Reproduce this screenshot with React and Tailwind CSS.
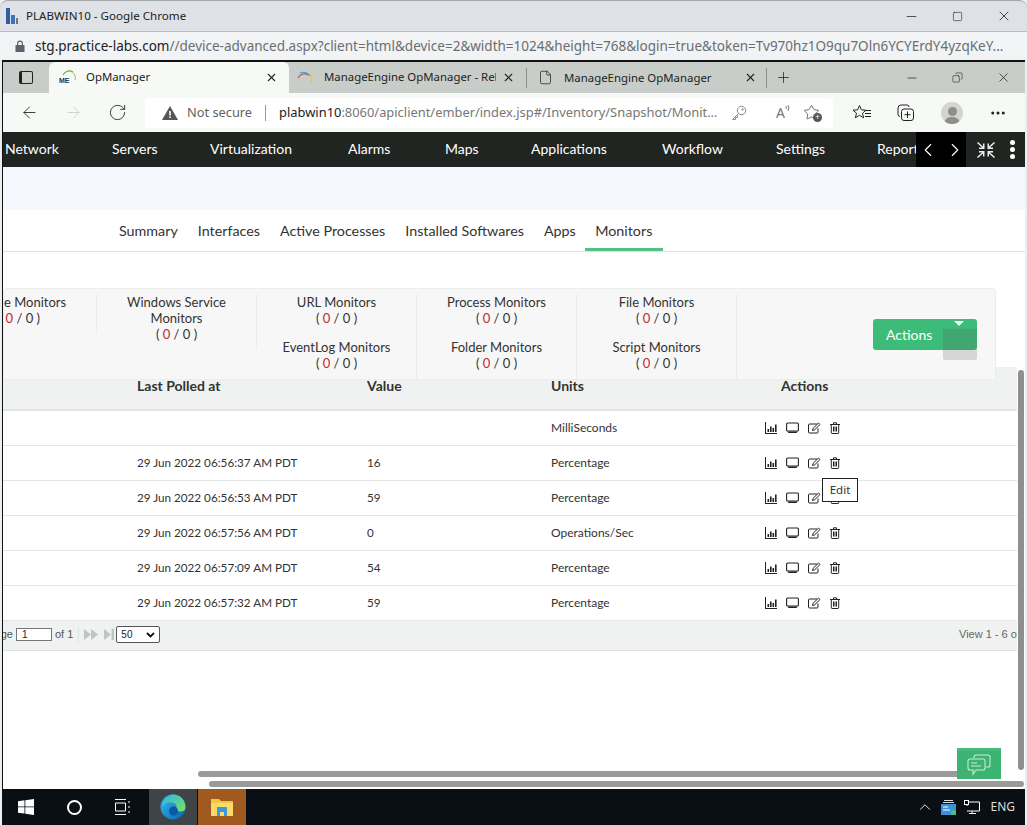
import { ArrowLeft, ArrowRight, ChevronLeft, ChevronRight, ChevronUp, Copy, File, Minus, MoreHorizontal, Plus, RotateCw, Square, Star, X } from 'lucide-react'

const navItems = [
  { label: 'Network', w: 'w-[107px]' },
  { label: 'Servers', w: 'w-[98px]' },
  { label: 'Virtualization', w: 'w-[138px]' },
  { label: 'Alarms', w: 'w-[97px]' },
  { label: 'Maps', w: 'w-[86px]' },
  { label: 'Applications', w: 'w-[131px]' },
  { label: 'Workflow', w: 'w-[114px]' },
  { label: 'Settings', w: 'w-[101px]' },
  { label: 'Reports', w: 'w-[39px]' },
]

const tabs = ['Summary', 'Interfaces', 'Active Processes', 'Installed Softwares', 'Apps']

const rows = [
  { polled: '', value: '', units: 'MilliSeconds' },
  { polled: '29 Jun 2022 06:56:37 AM PDT', value: '16', units: 'Percentage' },
  { polled: '29 Jun 2022 06:56:53 AM PDT', value: '59', units: 'Percentage' },
  { polled: '29 Jun 2022 06:57:56 AM PDT', value: '0', units: 'Operations/Sec' },
  { polled: '29 Jun 2022 06:57:09 AM PDT', value: '54', units: 'Percentage' },
  { polled: '29 Jun 2022 06:57:32 AM PDT', value: '59', units: 'Percentage' },
]

const Count = () => (
  <div>( <span className="text-[#c0282d]">0</span> / 0 )</div>
)

const MonitorCell = ({ title, line2 }) => (
  <div className="h-[45px] text-center text-[13px] leading-[16px] text-[#333]">
    <div>{title}</div>
    {line2 && <div>{line2}</div>}
    <Count />
  </div>
)

const ChartIcon = () => (
  <svg width="12" height="12" viewBox="0 0 12 12" fill="#222">
    <path d="M0 0h1v11h11v1H0z" />
    <path d="M2.500 7h1.600v3H2.500zM5 4.500h1.600V10H5zM7.500 6h1.600v4H7.500zM10 2.500h1.600V10H10z" />
  </svg>
)

const ScreenIcon = () => (
  <svg width="13" height="12" viewBox="0 0 13 12" fill="none">
    <rect x="0.6" y="1" width="11.800" height="8" rx="1" stroke="#222" strokeWidth="1.100" />
    <path d="M1.500 9.500h10l-1 1.500h-8z" fill="#222" />
  </svg>
)

const EditIcon = () => (
  <svg width="13" height="12" viewBox="0 0 13 12" fill="none" stroke="#222">
    <path d="M9 2H1.500a1 1 0 0 0-1 1v7a1 1 0 0 0 1 1h7.500a1 1 0 0 0 1-1V6.500" />
    <path d="M4.500 8.500l.6-2.200L10.500 1l1.500 1.500-5.300 5.300z" fill="#fff" />
  </svg>
)

const TrashIcon = () => (
  <svg width="10" height="12" viewBox="0 0 10 12" fill="none" stroke="#222">
    <path d="M0 2.500h10M3.500 2.500V.8h3v1.700" />
    <path d="M1.300 2.500v8.200a.8.8 0 0 0 .8.800h5.800a.8.8 0 0 0 .8-.8V2.500" />
    <path d="M3.500 4.500v5M5 4.500v5M6.500 4.500v5" />
  </svg>
)

const FilledArrows = () => (
  <svg width="32" height="11" viewBox="0 0 32 11" fill="#bfc5c2">
    <path d="M0 0l7 5.500L0 11zM7 0l7 5.500L7 11z" />
    <path d="M20 0l7 5.500L20 11zM27.500 0H30v11h-2.500z" />
  </svg>
)

const EdgeLogo = () => (
  <svg width="26" height="26" viewBox="0 0 26 26">
    <defs>
      <linearGradient id="edgeA" x1="0" y1="0" x2="1" y2="1">
        <stop offset="0" stopColor="#35c1f1" />
        <stop offset="1" stopColor="#0b5fb0" />
      </linearGradient>
      <linearGradient id="edgeB" x1="0" y1="0" x2="1" y2="1">
        <stop offset="0" stopColor="#2fb6e8" />
        <stop offset="1" stopColor="#7be25a" />
      </linearGradient>
    </defs>
    <circle cx="13" cy="13" r="12.500" fill="url(#edgeA)" />
    <path d="M3 9C5 3 10 .5 13 .5 20 .5 25.500 6 25.500 13c0 3-2 4.500-5 4.500-3 0-5-1-5-2.500 2-1 1.500-5.500-3-6.500C8 7.500 4 9 3 13z" fill="url(#edgeB)" />
    <circle cx="13.500" cy="17" r="4.500" fill="#0a58a8" />
  </svg>
)

const FolderLogo = () => (
  <svg width="22" height="20" viewBox="0 0 22 20">
    <path d="M0 2h8l2 2h12v15H0z" fill="#f5c542" />
    <path d="M0 6h22v13H0z" fill="#fcd96b" />
    <path d="M6 10h10v9H6z" fill="#3d9ad8" />
    <path d="M9 15h4v4H9z" fill="#fcd96b" />
  </svg>
)

const MeLogo = () => (
  <svg width="18" height="18" viewBox="0 0 18 18" fill="none">
    <path d="M4 7a7 7 0 0 1 10-3" stroke="#5fb548" strokeWidth="1.200" />
    <path d="M8 3a7 7 0 0 1 8 9" stroke="#8ac75a" strokeWidth="1" />
    <text x="0" y="15" fontSize="7" fontWeight="700" fontFamily="Liberation Sans" fill="#333">ME</text>
  </svg>
)

const KeyIcon = () => (
  <svg width="16" height="16" viewBox="0 0 16 16" fill="none" stroke="#8a8a8a" className="ml-[12px] shrink-0">
    <circle cx="10.500" cy="5.500" r="4.200" />
    <circle cx="11.500" cy="4.500" r=".8" />
    <path d="M7.500 8.500L1.500 14.500H4.500V12.500H6.500V10.500" />
  </svg>
)

const FavoritesIcon = () => (
  <svg width="20" height="17" viewBox="0 0 20 17" fill="none" stroke="#222" className="ml-[19px]">
    <path d="M7.500 1.500l1.900 4.300 4.600.4-3.500 3 1.100 4.600-4.100-2.500-4.100 2.500 1.100-4.600-3.500-3 4.600-.4z" />
    <path d="M14 6.500h5M13 9.500h6M13 12.500h6" />
  </svg>
)

const TitleBar = () => (
  <div className="h-[32px] shrink-0 bg-[#dee1e6] flex items-center border-b border-[#b9bcc0] border-t border-t-[#a4a7aa] rounded-t-[8px]">
    <div className="ml-[6px] mr-[8px] flex items-end gap-[1px] h-[16px]">
      <div className="w-[4px] h-[16px] bg-[#2f5d9e]" />
      <div className="w-[4px] h-[9px] bg-[#3f72b8]" />
      <div className="w-[2px] h-[6px] bg-[#777]" />
    </div>
    <span className="text-[11.6px] text-[#222]">PLABWIN10 - Google Chrome</span>
    <div className="ml-auto flex items-center text-[#222]">
      <Minus size={15} strokeWidth={1.200} className="mr-[33px]" />
      <Square size={11} strokeWidth={1.300} className="mr-[33px]" />
      <X size={16} strokeWidth={1.200} className="mr-[15px]" />
    </div>
  </div>
)

const HostAddress = () => (
  <div className="h-[28px] shrink-0 bg-[#f1f3f4] flex items-center pl-[15px] whitespace-nowrap">
    <svg width="10" height="12" viewBox="0 0 10 12" className="mr-[10px]" fill="#5f6368">
      <path d="M2 5V3.500a3 3 0 0 1 6 0V5h1.500v7H.5V5zM3.200 5h3.600V3.500a1.800 1.800 0 0 0-3.600 0z" />
    </svg>
    <span className="text-[13.5px] text-[#6a6e72]">
      <span className="text-[#202124]">stg.practice-labs.com</span>//device-advanced.aspx?client=html&amp;device=2&amp;width=1024&amp;height=768&amp;login=true&amp;token=Tv970hz1O9qu7Oln6YCYErdY4yzqKeY...
    </span>
  </div>
)

const BrowserTabs = () => (
  <div className="h-[33px] shrink-0 bg-[#c9cdc9] flex items-center border-t-2 border-[#111] text-[11.4px] text-[#222]">
    <div className="w-[46px] h-full flex items-center justify-center">
      <div className="w-[14px] h-[13px] rounded-[2px] border border-[#222] border-l-[3px]" />
    </div>
    <div className="w-[240px] h-full bg-[#f7f9f7] rounded-t-[6px] flex items-center pl-[10px] pb-[1px]">
      <MeLogo />
      <span className="ml-[9px]">OpManager</span>
      <X size={13} className="ml-auto mr-[11px]" />
    </div>
    <div className="w-[237px] h-full flex items-center pl-[8px] pb-[1px]">
      <svg width="17" height="14" viewBox="0 0 17 14" fill="none">
        <path d="M1 8a7 7 0 0 1 10-3" stroke="#d8473f" strokeWidth="1.200" />
        <path d="M3 3a8 8 0 0 1 10 3" stroke="#3ea7d8" strokeWidth="1.200" />
        <path d="M13 4a7 7 0 0 1 1 8" stroke="#efc23a" strokeWidth="1.500" />
      </svg>
      <span className="ml-[10px] w-[172px] overflow-hidden whitespace-nowrap">ManageEngine OpManager - Release</span>
      <X size={13} className="ml-auto mr-[11px]" />
    </div>
    <div className="w-[240px] h-[20px] flex items-center border-l border-[#8d908d]">
      <File size={15} strokeWidth={1.200} className="ml-[11px]" />
      <span className="ml-[11px]">ManageEngine OpManager</span>
      <X size={13} className="ml-auto mr-[9px]" />
    </div>
    <div className="h-[20px] border-l border-[#8d908d] flex items-center pl-[8px]">
      <Plus size={17} strokeWidth={1.100} />
    </div>
    <div className="ml-auto h-full flex items-center">
      <Minus size={14} strokeWidth={1.200} className="mr-[33px]" />
      <Copy size={11} strokeWidth={1.300} className="mr-[33px] -scale-x-100" />
      <X size={15} strokeWidth={1.200} className="mr-[14px]" />
    </div>
  </div>
)

const Toolbar = () => (
  <div className="h-[39px] shrink-0 bg-[#f7f9f7] flex items-center">
    <ArrowLeft size={19} strokeWidth={1.100} className="ml-[17px] text-[#222]" />
    <ArrowRight size={19} strokeWidth={1.100} className="ml-[25px] text-[#c9cbc9]" />
    <RotateCw size={19} strokeWidth={1.200} className="ml-[25px] text-[#333]" />
    <div className="ml-[18px] w-[688px] h-[30px] bg-white rounded-[4px] flex items-center pl-[17px] whitespace-nowrap">
      <svg width="16" height="14" viewBox="0 0 16 14" className="mr-[9px] shrink-0">
        <path d="M8 0l8 14H0z" fill="#555" />
        <path d="M7.200 5h1.600v4.500H7.200zM7.200 10.500h1.600V12H7.200z" fill="#fff" />
      </svg>
      <span className="text-[12.800px] text-[#5f6360] shrink-0">Not secure</span>
      <div className="w-px h-[16px] shrink-0 bg-[#999] mx-[13px]" />
      <span className="text-[12.900px] text-[#222] flex-1 min-w-0">
        plabwin10<span className="text-[#777]">:8060/apiclient/ember/index.jsp#/Inventory/Snapshot/Monit...</span>
      </span>
      <KeyIcon />
      <span className="ml-[29px] text-[14px] text-[#777] flex items-start shrink-0">
        A
        <svg width="6" height="8" viewBox="0 0 6 8" fill="none" stroke="#777" className="mt-[2px]">
          <path d="M1 5a3 3 0 0 0 0-3M3 7a6 6 0 0 0 0-6" />
        </svg>
      </span>
      <span className="ml-[12px] mr-[13px] relative shrink-0">
        <Star size={17} strokeWidth={1.100} className="text-[#444]" />
        <span className="absolute -right-[2px] -bottom-[1px] w-[9px] h-[9px] rounded-full bg-[#555] text-white text-[8px] leading-[8px] text-center">+</span>
      </span>
    </div>
    <FavoritesIcon />
    <svg width="17" height="17" viewBox="0 0 17 17" fill="none" stroke="#222" className="ml-[25px]">
      <path d="M3 12.500a2 2 0 0 1-2-2V4a3 3 0 0 1 3-3h6a2 2 0 0 1 2 2" />
      <rect x="4.500" y="5" width="12" height="11.500" rx="2.500" fill="#f7f9f7" />
      <path d="M10.500 7.500v6.500M7.500 10.700h6" />
    </svg>
    <div className="ml-[27px] w-[22px] h-[22px] rounded-full bg-[#d4d4d2] flex flex-col items-center justify-end overflow-hidden">
      <div className="w-[9px] h-[9px] rounded-full bg-[#8d8d8b] mb-[1px]" />
      <div className="w-[16px] h-[7px] rounded-t-full bg-[#8d8d8b]" />
    </div>
    <MoreHorizontal size={18} className="ml-[26px] text-[#222]" />
  </div>
)

const NavBar = () => (
  <div className="h-[35px] shrink-0 bg-[#212522] flex items-center text-white text-[14px] pl-[2px]">
    <div className="w-[911px] flex overflow-hidden whitespace-nowrap pb-[2px]">
      {navItems.map((item) => (
        <div key={item.label} className={`${item.w} shrink-0 overflow-hidden`}>{item.label}</div>
      ))}
    </div>
    <div className="w-[50px] h-full bg-black flex items-center justify-center gap-[5px]">
      <ChevronLeft size={22} strokeWidth={1.200} />
      <ChevronRight size={22} strokeWidth={1.200} />
    </div>
    <svg width="18" height="16" viewBox="0 0 18 16" fill="#eee" className="ml-[11px]">
      <path d="M1 0l5 4.500V1.500h1.500V7H2V5.500h3L0 1zM17 0l-5 4.500V1.500h-1.500V7H16V5.500h-3L18 1zM1 16l5-4.500v3h1.500V9H2v1.500h3L0 15zM17 16l-5-4.500v3h-1.500V9H16v1.500h-3L18 15z" />
    </svg>
    <div className="ml-[15px] flex flex-col gap-[2px]">
      <div className="w-[5px] h-[5px] rounded-full bg-white" />
      <div className="w-[5px] h-[5px] rounded-full bg-white" />
      <div className="w-[5px] h-[5px] rounded-full bg-white" />
    </div>
  </div>
)

const SubTabs = () => (
  <div className="h-[42px] flex items-center pl-[116px] pt-[1px] border-b border-[#dfe2e0] text-[14.300px] text-[#333]">
    <div className="flex gap-[20px]">
      {tabs.map((t) => (
        <span key={t}>{t}</span>
      ))}
    </div>
    <div className="ml-[9px] w-[78px] h-full flex items-center justify-center border-b-[3px] border-[#52c084] pt-[3px]">Monitors</div>
  </div>
)

const MonitorPanel = () => (
  <div className="relative z-10 w-[993px] h-[92px] -mb-[13px] mt-[36px] pt-[5px] bg-[#f7f7f7] border border-[#eceeed] rounded-[3px] flex">
    <div className="w-[93px] h-[40px] border-r border-[#ececec] overflow-hidden text-[13px] leading-[16px] text-[#333] text-right whitespace-nowrap">
      <div className="pr-[32px]">e Monitors</div>
      <div className="pr-[56px] flex justify-end"><Count /></div>
    </div>
    <div className="w-[160px] h-[56px] border-r border-[#ececec]">
      <MonitorCell title="Windows Service" line2="Monitors" />
    </div>
    <div className="w-[160px] border-r border-[#ececec]">
      <MonitorCell title="URL Monitors" />
      <MonitorCell title="EventLog Monitors" />
    </div>
    <div className="w-[160px] border-r border-[#ececec]">
      <MonitorCell title="Process Monitors" />
      <MonitorCell title="Folder Monitors" />
    </div>
    <div className="w-[160px] border-r border-[#ececec]">
      <MonitorCell title="File Monitors" />
      <MonitorCell title="Script Monitors" />
    </div>
    <div className="relative ml-[136px] mt-[25px] w-[104px] h-[31px] bg-[#3dbb78] rounded-[3px] text-white text-[14px] flex items-center pl-[13px]">
      Actions
      <div className="absolute right-0 top-[10px] w-[34px] h-[31px] bg-[#555]/20 rounded-b-[2px]" />
      <div className="absolute left-[81px] top-[2px] w-0 h-0 border-x-[5px] border-x-transparent border-t-[5px] border-t-white" />
    </div>
  </div>
)

const MonitorTable = () => (
  <div className="w-[1014px]">
    <div className="h-[44px] bg-[#eff2f0] border-b-2 border-[#e2e5e3] grid grid-cols-[134px_230px_184px_214px_1fr] pt-[8px] text-[14px] font-bold text-[#333]">
      <div />
      <div>Last Polled at</div>
      <div>Value</div>
      <div>Units</div>
      <div className="pl-[16px]">Actions</div>
    </div>
    {rows.map((r, i) => (
      <div key={i} className="h-[35px] border-b border-[#e3e6e4] grid grid-cols-[134px_230px_184px_214px_1fr] items-center text-[11.700px] text-[#333]">
        <div />
        <div>{r.polled}</div>
        <div>{r.value}</div>
        <div className="text-[12px]">{r.units}</div>
        <div className="flex items-center gap-[9px]">
          <ChartIcon />
          <ScreenIcon />
          <EditIcon />
          <TrashIcon />
        </div>
      </div>
    ))}
    <div className="h-[30px] pb-[2px] bg-[#eff2f0] border-b border-[#dfe2e0] flex items-center font-['Liberation_Sans'] text-[11px] text-[#555] whitespace-nowrap">
      <span className="w-[10px] overflow-hidden flex justify-end shrink-0">ge</span>
      <div className="ml-[3px] w-[36px] h-[13px] bg-white border border-[#767676] text-[10px] leading-[11px] text-[#222] pl-[5px]">1</div>
      <span className="ml-[3px]">of 1</span>
      <div className="ml-[5px] w-px h-[18px] bg-[#e0e4e2]" />
      <div className="ml-[5px]"><FilledArrows /></div>
      <div className="w-[44px] h-[17px] bg-white border border-[#555] rounded-[2px] flex items-center justify-between px-[4px] text-[10px] text-[#222]">
        50
        <svg width="9" height="6" viewBox="0 0 9 6" fill="none" stroke="#111" strokeWidth="1.800"><path d="M1 1l3.500 3.500L8 1" /></svg>
      </div>
      <div className="ml-auto w-[58px] overflow-hidden text-[#666]">View 1 - 6 of 6</div>
    </div>
  </div>
)

const Taskbar = () => (
  <div className="h-[36px] shrink-0 bg-[#0a0f14] flex items-center text-white">
    <svg width="16" height="16" viewBox="0 0 16 16" fill="#fff" className="ml-[15px]">
      <path d="M0 2.200l6.500-.9v6.200H0zM7.300 1.200L16 0v7.500H7.300zM0 8.300h6.500v6.300L0 13.700zM7.300 8.300H16V16l-8.700-1.200z" />
    </svg>
    <div className="ml-[33px] w-[15px] h-[15px] rounded-full border-2 border-white" />
    <svg width="16" height="16" viewBox="0 0 16 16" fill="none" stroke="#fff" className="ml-[33px]">
      <path d="M0 .5h11M0 15.500h11M.5 4h10v8H.500zM14 2v2M14 7v2M14 12v2" />
    </svg>
    <div className="ml-[18px] w-[48px] h-full bg-[#3f4446] flex items-center justify-center"><EdgeLogo /></div>
    <div className="ml-px w-[48px] h-full bg-[#a05a20] flex items-center justify-center"><FolderLogo /></div>
    <div className="ml-auto flex items-center">
      <ChevronUp size={18} strokeWidth={1.200} />
      <svg width="15" height="15" viewBox="0 0 15 15" className="ml-[7px]">
        <path d="M3 .5h9M2 2.500h11" stroke="#ddd" />
        <rect x="0" y="4" width="15" height="11" fill="#3d8fd8" />
        <path d="M2 7h5M2 10h7" stroke="#fff" />
        <circle cx="12.500" cy="12.500" r="2.500" fill="#4cc27a" />
      </svg>
      <svg width="16" height="14" viewBox="0 0 16 14" fill="none" stroke="#fff" className="ml-[8px]">
        <path d="M3 2h12.500v9H3M8 11v2.500M5 13.500h7M3 6V4" />
        <rect x=".5" y=".5" width="4" height="4" fill="#0a0f14" />
      </svg>
      <span className="ml-[10px] mr-[10px] text-[12px] text-[#ddd] font-['Noto_Sans']">ENG</span>
    </div>
  </div>
)

const App = () => (
  <div className="relative w-[1027px] h-[825px] overflow-hidden bg-[#eceff1] flex flex-col font-['Noto_Sans',sans-serif]">
    <TitleBar />
    <HostAddress />
    <div className="flex-1 min-h-0 flex flex-col ml-[2px] mr-[2px] border-l border-[#111]">
      <BrowserTabs />
      <Toolbar />
      <div className="flex-1 min-h-0 bg-white flex flex-col font-['Lato',sans-serif] relative">
        <NavBar />
        <div className="h-[43px] shrink-0 bg-[#f5f8fe]" />
        <SubTabs />
        <MonitorPanel />
        <MonitorTable />

        {/* edit tooltip over the row icons */}
        <div className="absolute left-[819px] top-[346px] w-[36px] h-[24px] bg-white border border-[#222] text-[11.500px] text-[#333] flex items-center justify-center font-['Noto_Sans']">Edit</div>

        {/* scrollbars */}
        <div className="absolute left-[1015px] top-[238px] w-[6px] h-[400px] rounded-full bg-[#8f8f8f]" />
        <div className="absolute left-[195px] top-[639px] w-[770px] h-[6px] rounded-full bg-[#9a9a9a]" />
        <div className="absolute left-[206px] top-[649px] w-[815px] h-[6px] rounded-full bg-[#9a9a9a]" />

        {/* chat widget */}
        <div className="absolute left-[954px] top-[616px] w-[44px] h-[31px] bg-[#3cb371] border-t-[3px] border-[#45bd7a] flex items-center justify-center">
          <svg width="24" height="22" viewBox="0 0 24 22" fill="none" stroke="#c9ecd8" strokeWidth="1.100">
            <path d="M7 4V3a2 2 0 0 1 2-2h12a2 2 0 0 1 2 2v8a2 2 0 0 1-2 2h-2" />
            <path d="M3 5h13a2 2 0 0 1 2 2v7a2 2 0 0 1-2 2H9l-3 4v-4H3a2 2 0 0 1-2-2V7a2 2 0 0 1 2-2z" />
            <path d="M4 9h6M4 12h10" />
          </svg>
        </div>
      </div>
      <Taskbar />
    </div>
  </div>
)

export default App
